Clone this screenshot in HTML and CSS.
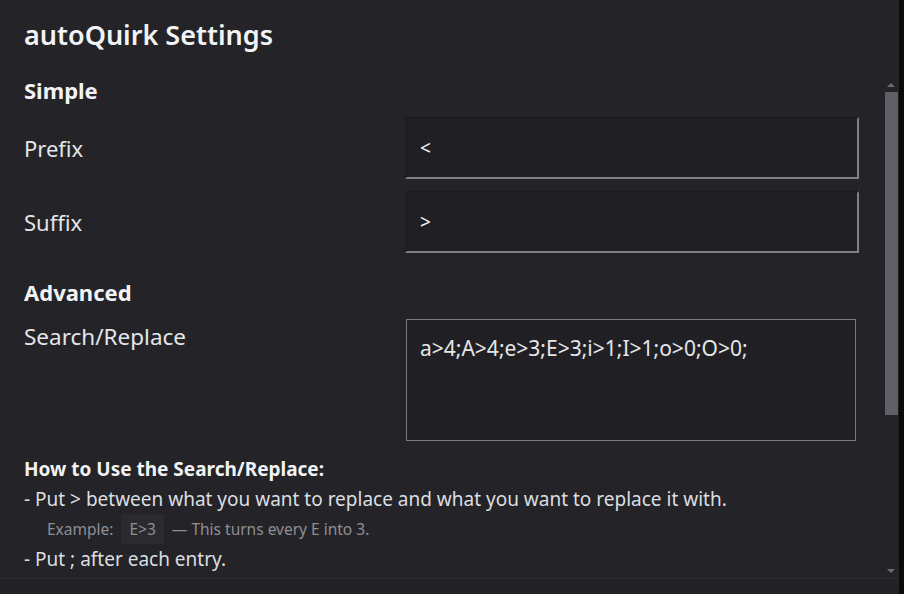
FILE: index.html
```html
<!DOCTYPE html>
<html lang="en">
<head>
<meta charset="utf-8">
<title>autoQuirk Settings</title>
<link rel="stylesheet" href="styles.css">
</head>
<body>
<div class="modal">
  <header class="modal-header">
    <h1 class="title">autoQuirk Settings</h1>
  </header>
  <div class="scroll-area">
    <div class="content">
      <h2 class="section">Simple</h2>
      <div class="row">
        <label class="label">Prefix</label>
        <input class="field" type="text" value="&lt;">
      </div>
      <div class="row">
        <label class="label">Suffix</label>
        <input class="field" type="text" value="&gt;">
      </div>
      <h2 class="section section-adv">Advanced</h2>
      <div class="row row-top">
        <label class="label label-top">Search/Replace</label>
        <textarea class="area">a&gt;4;A&gt;4;e&gt;3;E&gt;3;i&gt;1;I&gt;1;o&gt;0;O&gt;0;</textarea>
      </div>
      <div class="help">
        <h3 class="help-title">How to Use the Search/Replace:</h3>
        <p class="help-line">- Put &gt; between what you want to replace and what you want to replace it with.</p>
        <p class="example">Example: <code class="chip">E&gt;3</code> — This turns every E into 3.</p>
        <p class="help-line">- Put ; after each entry.</p>
      </div>
    </div>
    <div class="scrollbar" aria-hidden="true">
      <div class="sb-btn"><span class="arrow-up"></span></div>
      <div class="sb-track"><div class="sb-thumb"></div></div>
      <div class="sb-btn"><span class="arrow-down"></span></div>
    </div>
  </div>
  <footer class="modal-footer"></footer>
</div>
</body>
</html>
```
FILE: styles.css
```css
html, body {
  margin: 0;
  padding: 0;
  background: #0b0b0c;
  height: 594px;
  overflow: hidden;
}
.modal {
  width: 899px;
  height: 594px;
  background: #242428;
  display: flex;
  flex-direction: column;
  font-family: "Noto Sans", sans-serif;
  color: #dbdee1;
}
.modal-header {
  height: 72px;
  box-sizing: border-box;
  padding: 17px 24px 0;
  flex: none;
}
.title {
  margin: 0;
  font-size: 27px;
  font-weight: 600;
  line-height: 36px;
  color: #f2f3f5;
}
.scroll-area {
  flex: none;
  height: 506px;
  display: flex;
}
.content {
  flex: 1;
  overflow: hidden;
  padding: 5px 0 0 24px;
}
.scrollbar {
  flex: none;
  width: 15px;
  margin-top: 5px;
  display: flex;
  flex-direction: column;
}
.sb-btn {
  height: 15px;
  flex: none;
  display: flex;
  align-items: center;
  justify-content: center;
  padding-right: 1px;
}
.arrow-up {
  width: 0;
  height: 0;
  border-left: 4px solid transparent;
  border-right: 4px solid transparent;
  border-bottom: 4px solid #6b6b74;
}
.arrow-down {
  width: 0;
  height: 0;
  border-left: 4px solid transparent;
  border-right: 4px solid transparent;
  border-top: 4px solid #6b6b74;
}
.sb-track {
  flex: 1;
  padding-left: 1px;
  border-right: 1px solid #1d1d20;
}
.sb-thumb {
  width: 13px;
  height: 323px;
  background: #5f5f68;
}
.section {
  margin: 0 0 14px;
  font-size: 22px;
  font-weight: 700;
  line-height: 26px;
  color: #f2f3f5;
}
.section-adv {
  margin-top: 26px;
  margin-bottom: 14px;
}
.row {
  display: grid;
  grid-template-columns: 381px 454px;
  align-items: center;
  margin-bottom: 12px;
}
.row-top {
  align-items: start;
  margin-bottom: 16px;
}
.label {
  font-size: 22px;
  line-height: 30px;
  color: #e3e5e8;
}
.label-top {
  padding-top: 3px;
  font-size: 22.5px;
}
.field {
  height: 62px;
  box-sizing: border-box;
  background: #202024;
  color: #f2f3f5;
  border: 2px solid #808080;
  border-top-color: #1d1d20;
  border-left-color: #1d1d20;
  padding: 0 0 0 13px;
  font-family: "Noto Sans", sans-serif;
  font-size: 19px;
  outline: none;
}
.area {
  width: 450px;
  height: 122px;
  box-sizing: border-box;
  margin-left: 1px;
  background: #202024;
  color: #e6e6e8;
  border: 1px solid #7a7a7e;
  padding: 14px 13px;
  font-family: "Noto Sans", sans-serif;
  font-size: 21px;
  line-height: 28px;
  resize: none;
  outline: none;
}
.help {
  color: #dbdee1;
}
.help-title {
  margin: 0 0 3px;
  font-size: 19px;
  font-weight: 700;
  line-height: 24px;
  color: #f2f3f5;
}
.help-line {
  margin: 0;
  font-size: 19px;
  line-height: 30px;
}
.example {
  margin: 0;
  padding: 1px 0 0 23px;
  font-size: 15.5px;
  line-height: 29px;
  color: #8e8e94;
}
.chip {
  font-family: "Noto Sans", sans-serif;
  font-size: 15.5px;
  background: #2a2a2f;
  padding: 4px 8px;
  margin: 0 4px;
  color: #8e8e94;
}
.modal-footer {
  flex: 1;
  background: #222226;
  border-top: 1px solid #2b2b2f;
}
```
